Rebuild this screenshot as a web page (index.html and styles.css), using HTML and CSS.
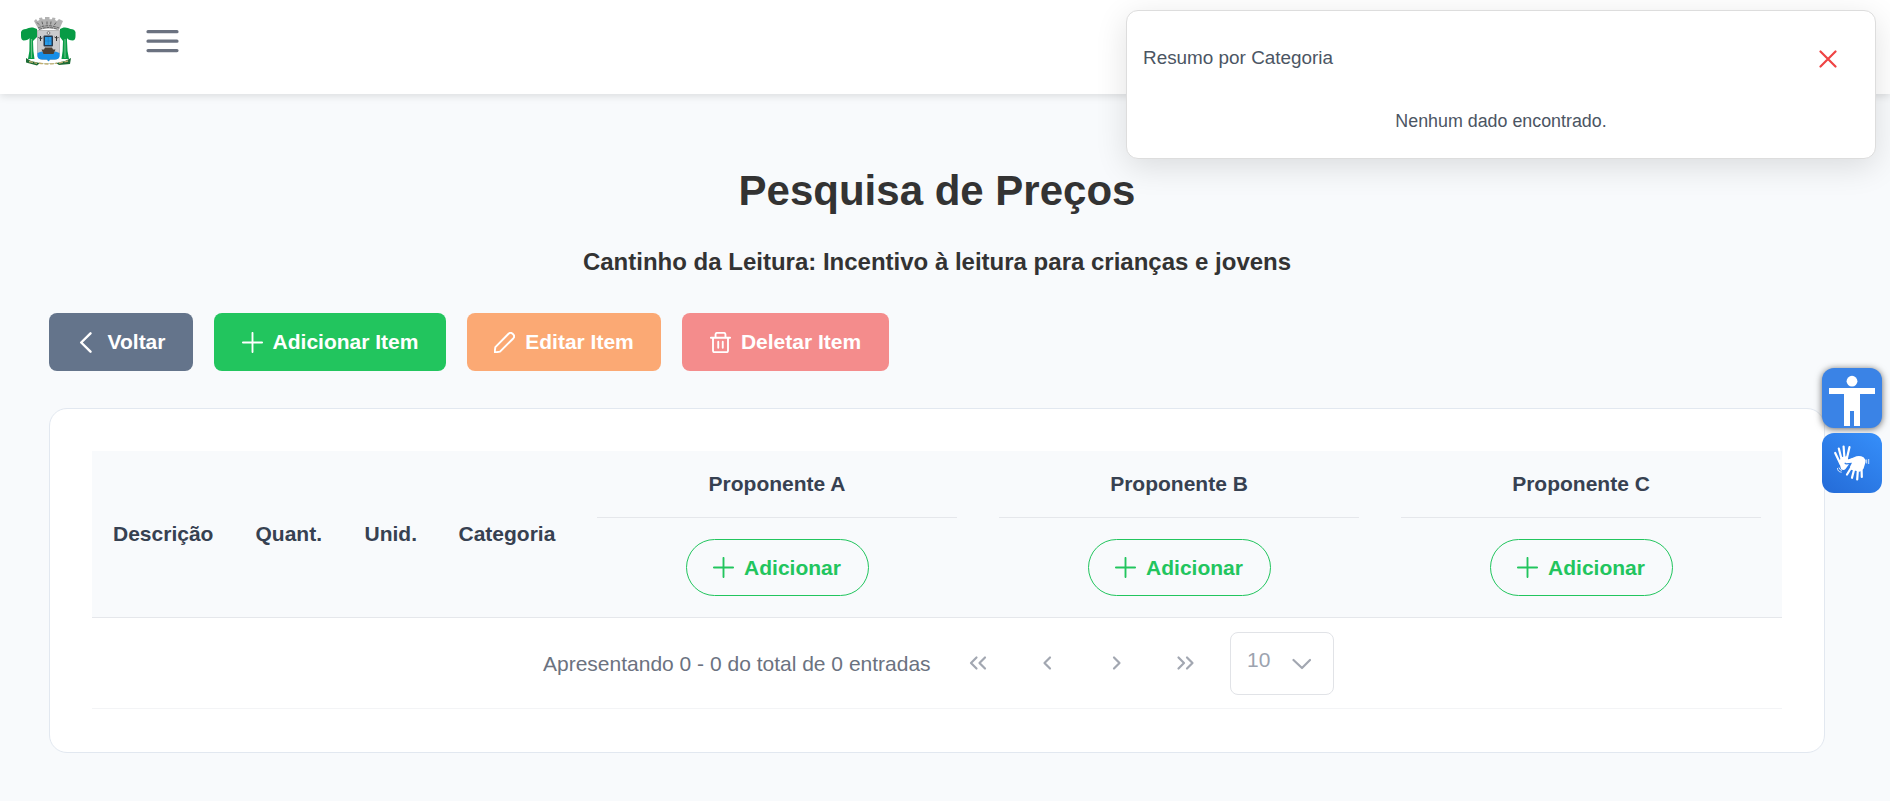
FILE: index.html
```html
<!DOCTYPE html>
<html lang="pt-BR">
<head>
<meta charset="utf-8">
<title>Pesquisa de Preços</title>
<link rel="stylesheet" href="styles.css">
</head>
<body>
<svg width="0" height="0" class="defs">
  <symbol id="plus" viewBox="0 0 14 14"><path d="M7 .6v12.800M.6 7h12.800" fill="none" stroke="currentColor" stroke-width="1.250" stroke-linecap="round"/></symbol>
</svg>
<header class="topbar">
  <svg class="logo" viewBox="0 0 56 50">
    <path d="M6 42l5 3q17 5 34 0l6-3-1 6-11 1-3-2q-8 1.500-16 0l-3 2.500-11-3z" fill="#1d6b35"/>
    <path d="M9 45.500l8 1.800M19 47q9 2 18 0M39 47l9-2" stroke="#c0ad70" stroke-width="1.300" fill="none" stroke-dasharray="4 1.500"/>
    <path d="M9.500 22q-1 2-6 2.500Q1 24 1 20v-4q1-3 5-3 3-2 7-1.500l4 1.500v8l-4 4q0 10 1.500 18H8q2-8 1.500-18z" fill="#079b45"/>
    <path d="M47 22q1 2 6 2.500 2.500-.5 2.500-4.500v-4q-1-3-5-3-3-2-7-1.500L40 13v8l3 4q0 10-1.500 18H49q-2-8-2-18z" fill="#079b45"/>
    <path d="M11.500 23v19M45 23v19" stroke="#62c083" stroke-width="1.200"/>
    <path d="M14 5l2-2 1.500 2 2-1-.5-2 3-.6.600 1.800h2.400V1h4.500v2.200h2.400l.6-1.800 3 .6-.5 2 2 1L39 3l4 2-4 9q-11-3-20 0z" fill="#b2b2b2"/>
    <path d="M18 12q10-4.500 21 0M17 6.500l3 3m2-4l1 4m4-4v4m4-4l-.5 4m5.500-3l-2 3M19 13.500q10-4 19 0" stroke="#5a5a5a" stroke-width=".9" fill="none" stroke-dasharray="3 .8"/>
    <path d="M17.500 14.500h22v24q0 5-6 5H30l-1.500 1.500L27 43.500h-3.500q-6 0-6-5z" fill="#cbcbcd" stroke="#999" stroke-width=".6"/>
    <path d="M17.500 37l4-1.500 3 1.500h8l3-1.500 4 1.500v3q0 3.500-5 3.500H30l-1.500 2-1.500-2h-4.500q-5 0-5-3.500z" fill="#168ee7"/>
    <path d="M21.500 33.500h2.500l1-2h7l1 2h2.500l-2 4.500h-10z" fill="#4b4035"/>
    <rect x="23.500" y="19.500" width="9.500" height="11" rx="1" fill="#26394d"/><path d="M25 21h6.500v8H25z" fill="#279be8"/><path d="M28.200 21v8M25 25h6.500" stroke="#1879c4" stroke-width=".6"/>
    <circle cx="28.500" cy="17" r="1.400" fill="#eee" stroke="#555" stroke-width=".7"/>
    <path d="M18.500 21q1 3 4 1m-2-2v5m14-4q3 3 4 0m-2-1v5" stroke="#333" stroke-width="1" fill="none"/>
  </svg>
  <svg class="menu" viewBox="0 0 33 23"><path d="M2 1.700h29M2 11.200h29M2 20.600h29" stroke="#6b7280" stroke-width="3.200" stroke-linecap="round"/></svg>
</header>

<main class="page">
  <h1 class="title">Pesquisa de Preços</h1>
  <h2 class="subtitle">Cantinho da Leitura: Incentivo à leitura para crianças e jovens</h2>
  <div class="actions">
    <button class="btn slate"><svg class="ic" viewBox="0 0 14 14"><path d="M9 .9L2.800 7 9 13.100" fill="none" stroke="currentColor" stroke-width="1.600" stroke-linecap="round" stroke-linejoin="round"/></svg>Voltar</button>
    <button class="btn green"><svg class="ic"><use href="#plus"/></svg>Adicionar Item</button>
    <button class="btn orange"><svg class="ic" viewBox="0 0 14 14"><path d="M.4 13.600l.5-3.500L9.700 1.200q1.300-1.300 2.700 0l.4.400q1.300 1.300 0 2.700L4 13.100z" fill="none" stroke="currentColor" stroke-width="1.300" stroke-linejoin="round"/></svg>Editar Item</button>
    <button class="btn red"><svg class="ic" viewBox="0 0 14 14"><path d="M.6 3.800h12.800M2 3.800v8.500q0 1.200 1.200 1.200h7.600q1.200 0 1.200-1.200V3.800M3.700 3.800V1.600q0-1 1-1h4.600q1 0 1 1v2.200M5.500 6.500v4M8.500 6.500v4" fill="none" stroke="currentColor" stroke-width="1.250" stroke-linecap="round"/></svg>Deletar Item</button>
  </div>
  <section class="card">
    <div class="thead">
      <div class="th">Descrição</div>
      <div class="th">Quant.</div>
      <div class="th">Unid.</div>
      <div class="th">Categoria</div>
      <div class="prop"><div class="prop-name">Proponente A</div><button class="add"><svg class="ic"><use href="#plus"/></svg>Adicionar</button></div>
      <div class="prop"><div class="prop-name">Proponente B</div><button class="add"><svg class="ic"><use href="#plus"/></svg>Adicionar</button></div>
      <div class="prop"><div class="prop-name">Proponente C</div><button class="add"><svg class="ic"><use href="#plus"/></svg>Adicionar</button></div>
    </div>
    <div class="pager">
      <span class="summary">Apresentando 0 - 0 do total de 0 entradas</span>
      <div class="nav">
        <svg class="pg" viewBox="0 0 20 20"><path d="M8.500 4.500L3 10l5.500 5.500M17 4.500L11.500 10l5.500 5.500"/></svg>
        <svg class="pg" viewBox="0 0 20 20"><path d="M13 4.500L7.500 10l5.500 5.500"/></svg>
        <svg class="pg" viewBox="0 0 20 20"><path d="M8 4.500l5.500 5.500L8 15.500"/></svg>
        <svg class="pg" viewBox="0 0 20 20"><path d="M3.500 4.500L9 10l-5.500 5.500M12 4.500l5.500 5.500-5.500 5.500"/></svg>
      </div>
      <div class="select"><span>10</span><svg class="chev" viewBox="0 0 20 12"><path d="M2.500 2L11 10l8-8"/></svg></div>
    </div>
  </section>
</main>

<aside class="popup">
  <div class="popup-head"><span>Resumo por Categoria</span>
    <svg class="close" viewBox="0 0 18 18"><path d="M1.500 1.500l15 15M16.500 1.500l-15 15" stroke="#ef4444" stroke-width="2.200" stroke-linecap="round"/></svg></div>
  <p class="popup-body">Nenhum dado encontrado.</p>
</aside>

<div class="tools">
  <div class="tool access"><svg viewBox="0 0 60 60"><circle cx="30" cy="13.200" r="5.400"/><path d="M7 20h46v6H38v32h-6V43h-4v15h-6V26H7z"/></svg></div>
  <div class="tool hands"><svg viewBox="0 0 60 60">
    <path d="M18.500 31l-5.300-11M20 28l-3.200-12.500M22.500 26l-.9-12.500M24.500 27l3-13" stroke="#fff" stroke-width="2.200" stroke-linecap="round" fill="none"/>
    <path d="M17 28l3-4 6-1v3.500l5-1.500q1.500 0 .5 1l-8.500 3.500q-1.500 1.500 1.500 2l2.500-.3-3.500 4.800q-2 2-4.500 0z"/>
    <path d="M29 35l-4 6.500M32.500 35l-2.500 9.800M36 35l-.8 11.500M39.500 34l.3 10" stroke="#fff" stroke-width="2.200" stroke-linecap="round" fill="none"/>
    <path d="M24 27.700l8-3.500q5-2.500 9.500 0 2.500 2 2 5l-2 6.500-3.500 3-9-2-1-3 2-4-6 .5q-1.500-.5 0-2.500z"/>
    <path d="M44.700 26.500v4M46.700 26v5M15.500 35q0 4 4.200 4.200M17 34.500q.5 2.500 3 3" stroke="#fff" stroke-width=".8" fill="none"/>
  </svg></div>
</div>
</body>
</html>
```
FILE: styles.css
```css
* { box-sizing: border-box; }
body {
  margin: 0;
  height: 801px;
  overflow: hidden;
  background: #f8fafc;
  font-family: "Liberation Sans", Arial, sans-serif;
  font-size: 21px;
  color: #4b5563;
}
.defs { position: absolute; }
button { font: inherit; font-weight: 700; }

.topbar {
  display: flex;
  height: 94px;
  padding: 16px 20px 0;
  background: #fff;
  box-shadow: 0 2px 8px rgba(0, 0, 0, .12);
}
.logo { width: 56px; height: 50px; }
.menu { width: 33px; height: 23px; margin: 14px 0 0 70px; }

.page { width: 1874px; padding: 0 49px; }
.title {
  margin: 72px 0 0;
  font-size: 42px;
  line-height: 50px;
  text-align: center;
  color: #333;
}
.subtitle {
  margin: 31px 0 0;
  font-size: 24px;
  line-height: 30px;
  text-align: center;
  color: #333;
}
.actions { display: flex; gap: 21px; margin-top: 36px; }
.btn {
  display: flex;
  align-items: center;
  justify-content: center;
  gap: 10px;
  height: 58px;
  padding: 0;
  border: 0;
  border-radius: 8px;
  color: #fff;
}
.ic { width: 21px; height: 21px; }
.slate { width: 144px; background: #64748b; }
.green { width: 232px; background: #22c55e; }
.orange { width: 194px; background: #fba974; }
.red { width: 207px; background: #f48c8c; }

.card {
  height: 345px;
  margin-top: 37px;
  padding: 42px;
  background: #fff;
  border: 1px solid #e2e8f0;
  border-radius: 18px;
}
.thead {
  display: grid;
  grid-template-columns: 142.5px 109px 94px 138.5px repeat(3, 402px);
  height: 167px;
  border-bottom: 1px solid #e5e7eb;
  background: #f8fafc;
  color: #374151;
  font-weight: 700;
}
.th { display: flex; align-items: center; padding-left: 21px; }
.prop { display: flex; flex-direction: column; align-items: center; padding: 0 21px; }
.prop-name {
  width: 100%;
  height: 67px;
  line-height: 65px;
  text-align: center;
  border-bottom: 1px solid #e5e7eb;
}
.add {
  display: flex;
  align-items: center;
  justify-content: center;
  gap: 10px;
  width: 183px;
  height: 57px;
  margin-top: 21px;
  padding: 0;
  border: 1px solid #22c55e;
  border-radius: 29px;
  background: transparent;
  color: #22c55e;
}
.pager {
  display: flex;
  align-items: center;
  height: 91px;
  padding-left: 451px;
  border-bottom: 1px solid #f3f4f6;
  color: #6b7280;
}
.summary { width: 388px; padding-top: 1px; white-space: nowrap; }
.nav { display: flex; gap: 49px; margin-left: 37px; }
.pg { width: 20px; height: 20px; }
.pg path, .chev path {
  fill: none;
  stroke: #a2a7b1;
  stroke-width: 2.2;
  stroke-linecap: round;
  stroke-linejoin: round;
}
.select {
  display: flex;
  justify-content: space-between;
  width: 104px;
  height: 63px;
  margin-left: 35px;
  padding: 15px 22px 0 16px;
  border: 1px solid #e1e3e7;
  border-radius: 8px;
  color: #9ca3af;
}
.chev { width: 20px; height: 12px; margin-top: 10px; }

.popup {
  position: absolute;
  top: 10px;
  left: 1126px;
  width: 750px;
  height: 149px;
  padding: 35px 38px 0 16px;
  background: #fff;
  border: 1px solid #ddd;
  border-radius: 12px;
  box-shadow: 0 8px 32px rgba(0, 0, 0, .12);
}
.popup-head {
  display: flex;
  justify-content: space-between;
  font-size: 18.9px;
  line-height: 24px;
}
.close { width: 18px; height: 18px; margin-top: 4px; }
.popup-body {
  margin: 39px -22px 0 0;
  font-size: 17.85px;
  line-height: 24px;
  text-align: center;
}
.tools {
  position: absolute;
  top: 368px;
  left: 1822px;
  display: grid;
  gap: 5px;
}
.tool { width: 60px; height: 60px; border-radius: 12px; fill: #fff; }
.tool svg { display: block; width: 60px; height: 60px; }
.access { background: #3a83e6; box-shadow: 0 1px 7px rgba(0, 0, 0, .6); }
.hands { background: linear-gradient(35deg, #246bd7, #368ffa); }
```
